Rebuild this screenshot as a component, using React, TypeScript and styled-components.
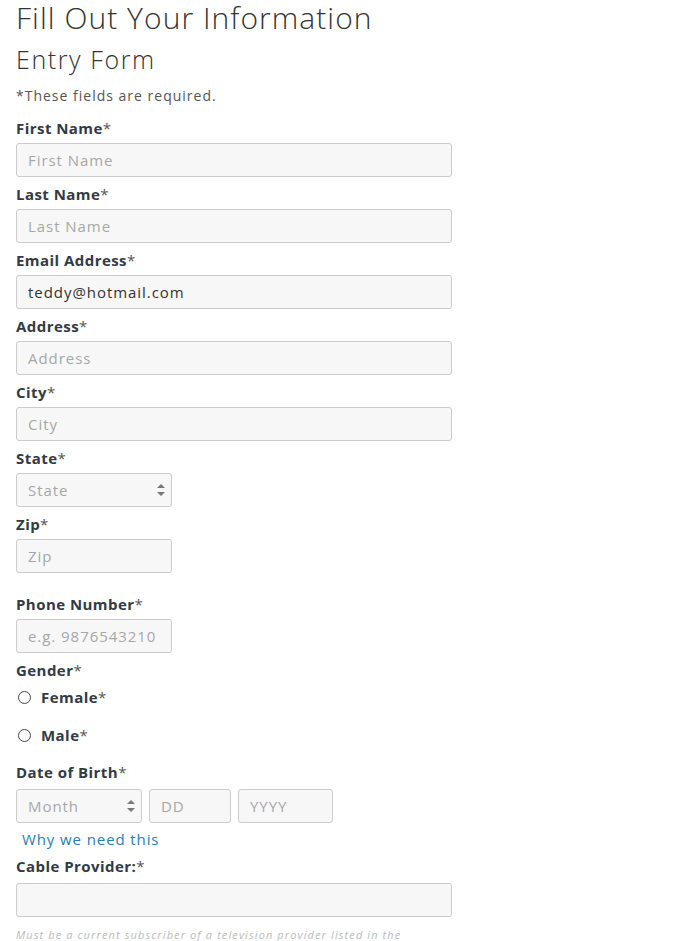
import React from "react";
import styled, { createGlobalStyle } from "styled-components";

const Global = createGlobalStyle`
  html, body { margin: 0; padding: 0; background: #fff; }
  body { font-family: "Open Sans", "DejaVu Sans", sans-serif; color: #333a44; }
  * { box-sizing: border-box; }
`;

const Page = styled.div`
  padding: 0 16px;
  width: 674px;
  height: 941px;
  overflow: hidden;
`;

const Title = styled.h1`
  margin: 0;
  font-size: 30px;
  font-weight: 300;
  line-height: 36px;
  color: #333;
  letter-spacing: 1.05px;
`;

const Subtitle = styled.h2`
  margin: 7px 0 0;
  font-size: 25px;
  font-weight: 300;
  line-height: 32px;
  color: #333;
  letter-spacing: 1.6px;
`;

const Note = styled.p`
  margin: 12px 0 0;
  font-size: 14px;
  line-height: 18px;
  color: #555;
  letter-spacing: 1px;
`;

const Form = styled.form`
  display: flex;
  flex-direction: column;
  margin-top: 14px;
`;

const Field = styled.div<{ $gapTop?: number }>`
  display: flex;
  flex-direction: column;
  margin-top: ${(p) => p.$gapTop ?? 0}px;
`;

const Label = styled.label<{ $mb?: number }>`
  font-size: 15px;
  font-weight: 700;
  line-height: 18px;
  height: 18px;
  color: #333a44;
  letter-spacing: 0.45px;
  margin-bottom: ${(p) => p.$mb ?? 6}px;
`;

const Star = styled.span`
  font-weight: 400;
  color: #555;
`;

const Input = styled.input<{ $w?: number }>`
  width: ${(p) => (p.$w ? `${p.$w}px` : "436px")};
  height: 34px;
  margin-bottom: 8px;
  border: 1px solid #ccc;
  border-radius: 3px;
  background: #f7f7f7;
  padding: 0 11px;
  font-family: "Open Sans", "DejaVu Sans", sans-serif;
  font-size: 15px;
  color: #333;
  letter-spacing: 0.95px;
  outline: none;
  &::placeholder { color: #a7a7a7; }
`;

const SelectBox = styled.div<{ $w: number }>`
  width: ${(p) => p.$w}px;
  height: 34px;
  border: 1px solid #ccc;
  border-radius: 3px;
  background: #f7f7f7;
  padding: 0 5px 0 11px;
  display: flex;
  align-items: center;
  justify-content: space-between;
  font-size: 15px;
  color: #a7a7a7;
  letter-spacing: 0.95px;
`;

const SelectWrap = styled.div`
  margin-bottom: 8px;
`;

const Arrows = () => (
  <svg width="10" height="18" viewBox="0 0 10 18">
    <path d="M1 7 L5 3 L9 7 Z" fill="#777" />
    <path d="M1 11 L5 15 L9 11 Z" fill="#777" />
  </svg>
);

const RadioGroup = styled.div`
  display: flex;
  flex-direction: column;
  gap: 18px;
  margin: 8px 0 18px 2px;
`;

const RadioRow = styled.label`
  display: flex;
  align-items: center;
  gap: 10px;
  height: 20px;
  font-size: 15px;
  font-weight: 700;
  color: #333a44;
  letter-spacing: 0.45px;
`;

const RadioCircle = styled.span`
  width: 13px;
  height: 13px;
  border: 1px solid #444;
  border-radius: 50%;
  background: #fff;
  display: inline-block;
`;

const DateRow = styled.div`
  display: flex;
  gap: 7px;
`;

const DateInput = styled(Input)`
  margin-bottom: 0;
`;

const Link = styled.a`
  margin: 6px 0 8px 6px;
  font-size: 15px;
  line-height: 20px;
  color: #2a7db5;
  letter-spacing: 0.9px;
  text-decoration: none;
`;

const Help = styled.p`
  margin: 3px 0 0;
  font-size: 11px;
  line-height: 14px;
  font-style: italic;
  color: #bbb;
  letter-spacing: 1.1px;
`;

const Req = () => <Star>*</Star>;

export default function App() {
  return (
    <Page>
      <Global />
      <Title>Fill Out Your Information</Title>
      <Subtitle>Entry Form</Subtitle>
      <Note>*These fields are required.</Note>
      <Form>
        <Field>
          <Label>First Name<Req /></Label>
          <Input placeholder="First Name" />
        </Field>
        <Field>
          <Label>Last Name<Req /></Label>
          <Input placeholder="Last Name" />
        </Field>
        <Field>
          <Label>Email Address<Req /></Label>
          <Input defaultValue="teddy@hotmail.com" />
        </Field>
        <Field>
          <Label>Address<Req /></Label>
          <Input placeholder="Address" />
        </Field>
        <Field>
          <Label>City<Req /></Label>
          <Input placeholder="City" />
        </Field>
        <Field>
          <Label>State<Req /></Label>
          <SelectWrap>
            <SelectBox $w={156}>State<Arrows /></SelectBox>
          </SelectWrap>
        </Field>
        <Field>
          <Label>Zip<Req /></Label>
          <Input $w={156} placeholder="Zip" />
        </Field>
        <Field $gapTop={14}>
          <Label>Phone Number<Req /></Label>
          <Input $w={156} placeholder="e.g. 9876543210" />
        </Field>
        <Field>
          <Label $mb={0}>Gender<Req /></Label>
          <RadioGroup>
            <RadioRow><RadioCircle /><span>Female<Req /></span></RadioRow>
            <RadioRow><RadioCircle /><span>Male<Req /></span></RadioRow>
          </RadioGroup>
        </Field>
        <Field>
          <Label $mb={8}>Date of Birth<Req /></Label>
          <DateRow>
            <SelectBox $w={126}>Month<Arrows /></SelectBox>
            <DateInput $w={82} placeholder="DD" />
            <DateInput $w={95} placeholder="YYYY" />
          </DateRow>
          <Link href="#">Why we need this</Link>
        </Field>
        <Field>
          <Label $mb={8}>Cable Provider:<Req /></Label>
          <Input />
        </Field>
        <Help>Must be a current subscriber of a television provider listed in the</Help>
      </Form>
    </Page>
  );
}
